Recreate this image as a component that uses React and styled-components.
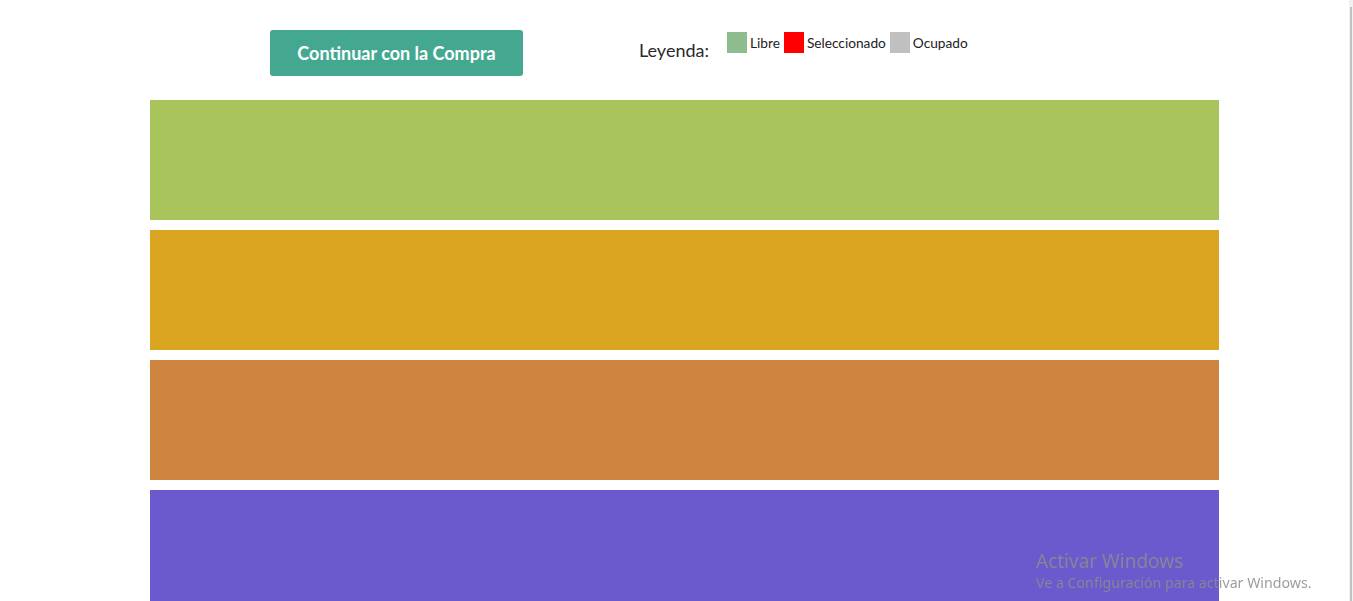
import React from "react";
import styled, { createGlobalStyle } from "styled-components";

const GlobalStyle = createGlobalStyle`
    html, body {
        margin: 0;
        padding: 0;
        background: #ffffff;
        overflow: hidden;
        font-family: Lato, "Noto Sans", sans-serif;
    }
`;

const legendItems = [
    { label: "Libre", color: "#8fbc8f" },
    { label: "Seleccionado", color: "#ff0000" },
    { label: "Ocupado", color: "#c0c0c0" },
];

const zones = ["#a8c35a", "#daa520", "#cd853f", "#6a5acd", "#6a5acd"];

// Main page component
const App = () => {
    return (
        <>
            <GlobalStyle />
            <Page>
                <Header>
                    <BuyButton type="button">Continuar con la Compra</BuyButton>
                    <Legend>
                        <LegendTitle>Leyenda:</LegendTitle>
                        {legendItems.map((item) => (
                            <LegendItem key={item.label}>
                                <Swatch color={item.color} />
                                <LegendLabel>{item.label}</LegendLabel>
                            </LegendItem>
                        ))}
                    </Legend>
                </Header>
                <Zones>
                    {zones.map((color, index) => (
                        <Zone key={index} color={color} />
                    ))}
                </Zones>
            </Page>
            <Watermark>
                <WatermarkTitle>Activar Windows</WatermarkTitle>
                <WatermarkText>Ve a Configuración para activar Windows.</WatermarkText>
            </Watermark>
            <ScrollTrack>
                <ScrollThumb />
            </ScrollTrack>
        </>
    );
};

const Page = styled.div`
    width: 100%;
    padding-top: 30px;
`;
const Header = styled.div`
    display: flex;
    align-items: flex-start;
    padding-left: 270px;
`;
const BuyButton = styled.button`
    width: 253px;
    height: 46px;
    border: none;
    border-radius: 3px;
    background-color: #44a891;
    color: #ffffff;
    font-family: Lato, "Noto Sans", sans-serif;
    font-weight: 700;
    font-size: 18px;
    padding: 0;
    cursor: pointer;
`;
const Legend = styled.div`
    display: flex;
    align-items: flex-start;
    margin-left: 116px;
    padding-top: 2px;
`;
const LegendTitle = styled.span`
    font-size: 18px;
    color: #2a2a2a;
    line-height: 20px;
    margin-top: 8px;
    margin-right: 18px;
`;
const LegendItem = styled.div`
    display: flex;
    align-items: flex-start;
    margin-right: 4px;
`;
const Swatch = styled.span`
    display: block;
    width: 20px;
    height: 21px;
    background-color: ${(p) => p.color};
`;
const LegendLabel = styled.span`
    font-size: 13.7px;
    color: #222222;
    line-height: 16px;
    margin-left: 3px;
    margin-top: 3px;
`;
const Zones = styled.div`
    display: flex;
    flex-direction: column;
    gap: 10px;
    width: 1069px;
    margin-top: 24px;
    margin-left: 150px;
`;
const Zone = styled.div`
    height: 120px;
    background-color: ${(p) => p.color};
`;
const Watermark = styled.div`
    position: fixed;
    left: 1036px;
    top: 549px;
    color: rgba(140, 140, 140, 0.85);
    font-family: "Noto Sans", "Open Sans", sans-serif;
    pointer-events: none;
`;
const WatermarkTitle = styled.div`
    font-size: 19px;
    line-height: 24px;
`;
const WatermarkText = styled.div`
    font-size: 14.2px;
    line-height: 20px;
`;
const ScrollTrack = styled.div`
    position: fixed;
    top: 0;
    right: 0;
    width: 4px;
    height: 100%;
    background-color: #f1f1f1;
`;
const ScrollThumb = styled.div`
    margin-top: 7px;
    margin-left: 1px;
    width: 2px;
    height: 594px;
    background-color: #c1c1c1;
`;

export default App;
